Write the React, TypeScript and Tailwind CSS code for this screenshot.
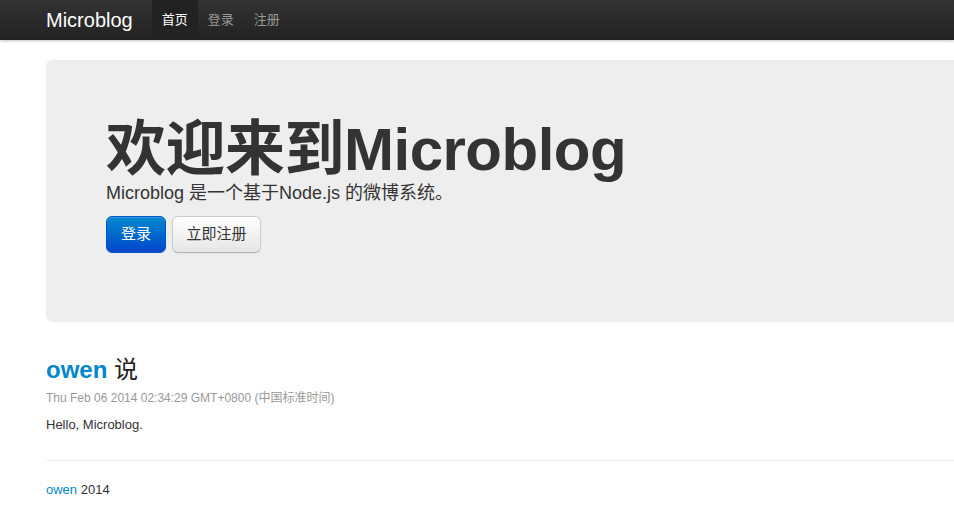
import React from 'react';

const font = "font-['Liberation_Sans','Noto_Sans_CJK_SC',sans-serif]";

const App: React.FC = () => {
  return (
    <div className={`min-h-screen w-[954px] overflow-hidden bg-white text-[#333] ${font}`}>
      {/* Navbar */}
      <div className="h-10 bg-gradient-to-b from-[#333333] to-[#222222] shadow-[0_1px_3px_rgba(0,0,0,0.25)]">
        <div className="ml-[46px] flex h-10 items-center">
          <a className="pr-[19px] text-[20px] leading-5 text-white">Microblog</a>
          <ul className="flex h-10">
            <li className="flex items-center bg-[#222] px-[10px] text-[13px] text-white">首页</li>
            <li className="flex items-center px-[10px] text-[13px] text-[#999]">登录</li>
            <li className="flex items-center px-[10px] text-[13px] text-[#999]">注册</li>
          </ul>
        </div>
      </div>

      <div className="ml-[46px] w-[940px]">
        {/* Hero */}
        <div className="mt-5 h-[262px] rounded-[6px] bg-[#eeeeee] px-[60px] pt-[60px]">
          <h1 className="text-[60px] font-bold leading-[60px] tracking-[-0.5px] text-[#333]">欢迎来到Microblog</h1>
          <p className="text-[18px] leading-[26px] text-[#333]">Microblog 是一个基于Node.js 的微博系统。</p>
          <div className="mt-[10px] flex gap-[6px]">
            <a className="flex h-[37px] items-center rounded-[6px] border border-[#0055cc] bg-gradient-to-b from-[#0088cc] to-[#0044cc] px-[14px] text-[15px] text-white shadow-[inset_0_1px_0_rgba(255,255,255,0.2)]">
              登录
            </a>
            <a className="flex h-[37px] items-center rounded-[6px] border border-[#cccccc] border-b-[#b3b3b3] bg-gradient-to-b from-white to-[#e6e6e6] px-[13.5px] text-[15px] text-[#333] shadow-[0_1px_2px_rgba(0,0,0,0.05)]">
              立即注册
            </a>
          </div>
        </div>

        {/* Post */}
        <div className="pt-[30px]">
          <h2 className="text-[24px] font-bold leading-[36px]">
            <a className="text-[#0088cc]">owen</a> <span className="font-normal text-[#222]">说</span>
          </h2>
          <p className="text-[12px] leading-5 text-[#999]">Thu Feb 06 2014 02:34:29 GMT+0800 (中国标准时间)</p>
          <p className="mt-[7px] text-[13px] leading-5 text-[#333]">Hello, Microblog.</p>
        </div>

        <hr className="mt-[25px] border-t border-[#eeeeee]" />

        <footer className="pt-[19px] text-[13px] leading-5">
          <a className="text-[#0088cc]">owen</a> 2014
        </footer>
      </div>
    </div>
  );
};

export default App;
